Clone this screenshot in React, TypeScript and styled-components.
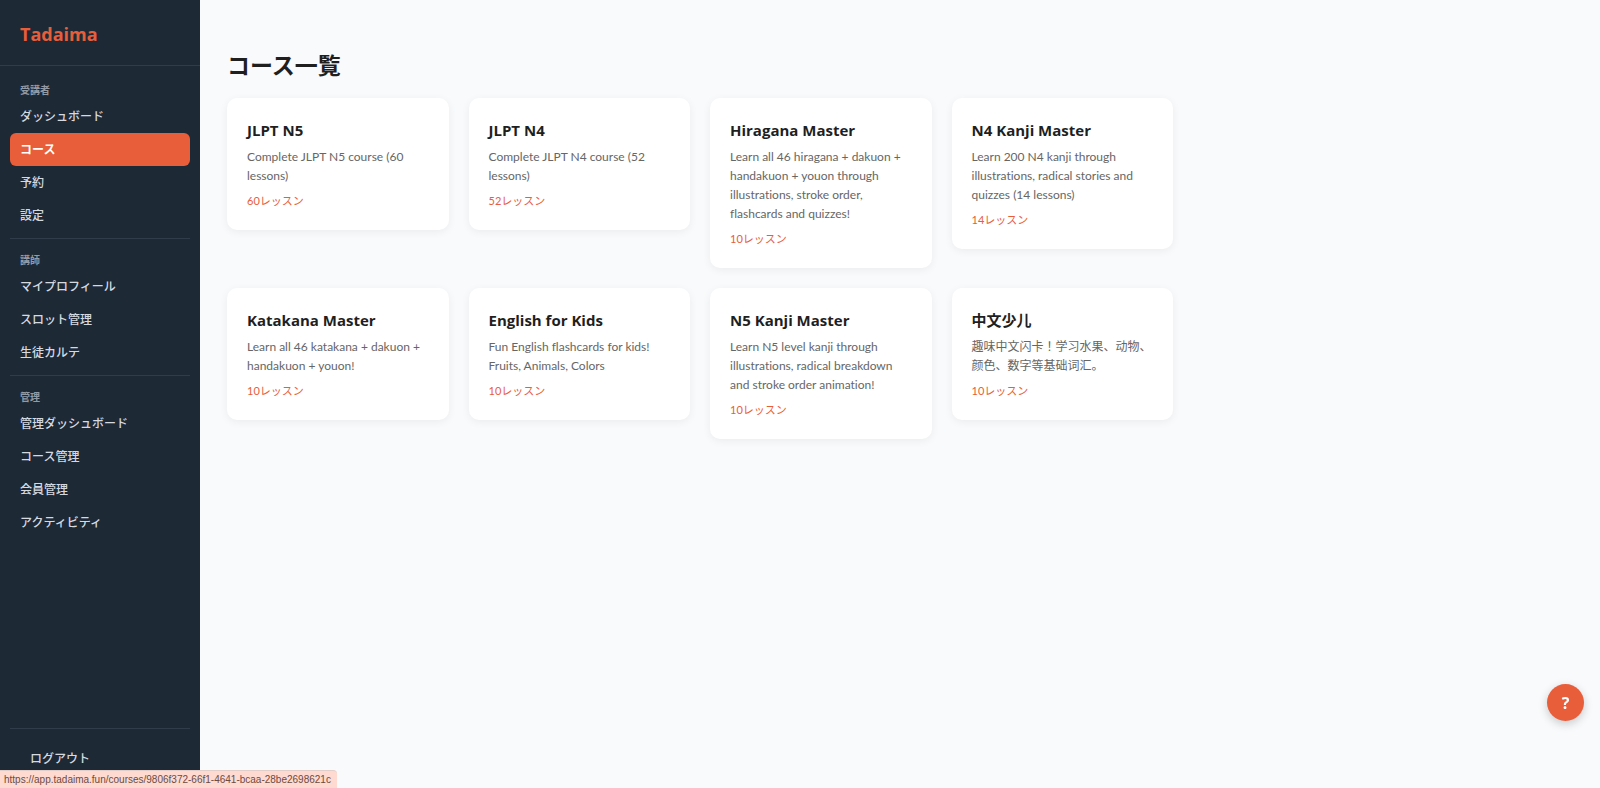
import React from 'react';
import styled, { createGlobalStyle } from 'styled-components';

const GlobalStyle = createGlobalStyle`
  *, *::before, *::after { box-sizing: border-box; }
  body {
    margin: 0;
    background: #f8fafc;
    color: #1f1f1f;
    font-family: "Open Sans", "Noto Sans CJK JP", sans-serif;
    font-size: 12px;
  }
`;

const Layout = styled.div`
  display: flex;
  min-height: 100vh;
`;

const Sidebar = styled.aside`
  display: flex;
  flex-direction: column;
  flex: none;
  position: sticky;
  top: 0;
  width: 200px;
  height: 100vh;
  background: #1e2936;
`;

const Brand = styled.a`
  padding: 22px 20px 18px;
  border-bottom: 1px solid #303c4a;
  color: #e85d3a;
  font-size: 18px;
  font-weight: 700;
  line-height: 25px;
  text-decoration: none;
`;

const Nav = styled.nav`
  flex: 1;
  min-height: 0;
  padding: 14px 10px 0;
  overflow: hidden;
`;

const Section = styled.section`
  & + & {
    margin-top: 6px;
    padding-top: 11px;
    border-top: 1px solid #303c4a;
  }
`;

const SectionLabel = styled.h2`
  margin: 0;
  padding: 0 10px;
  color: #929aa6;
  font-size: 10px;
  font-weight: 700;
  line-height: 20px;
`;

const NavLink = styled.a<{ $active?: boolean }>`
  display: block;
  padding: 0 10px;
  border-radius: 6px;
  background: ${({ $active }) => ($active ? '#e85d3a' : 'transparent')};
  color: ${({ $active }) => ($active ? '#ffffff' : '#d5dae1')};
  font-weight: ${({ $active }) => ($active ? 700 : 500)};
  line-height: 33px;
  text-decoration: none;
`;

const SidebarFooter = styled.div`
  margin: 0 10px;
  padding: 14px 10px 13px;
  border-top: 1px solid #303c4a;
`;

const LogoutButton = styled.button`
  display: block;
  width: 100%;
  padding: 0 10px;
  border: 0;
  background: none;
  color: #d5dae1;
  font: inherit;
  font-weight: 500;
  line-height: 32px;
  text-align: left;
  cursor: pointer;
`;

const Main = styled.main`
  flex: 1;
  min-width: 0;
  padding: 48px 27px;
`;

const PageTitle = styled.h1`
  margin: 0 0 16px;
  font-size: 23px;
  font-weight: 700;
  line-height: 34px;
`;

const CourseGrid = styled.div`
  display: grid;
  grid-template-columns: repeat(auto-fill, minmax(200px, 1fr));
  align-items: start;
  gap: 20px;
  max-width: 946px;
`;

const CourseCard = styled.a`
  display: block;
  padding: 20px;
  border-radius: 10px;
  background: #ffffff;
  box-shadow: 0 2px 8px rgba(0, 0, 0, 0.06);
  color: inherit;
  text-decoration: none;
`;

const CourseTitle = styled.h3`
  margin: 0 0 5px;
  font-size: 15px;
  font-weight: 700;
  line-height: 24px;
`;

const CourseText = styled.p`
  margin: 0 0 6px;
  color: #666666;
  font-family: Lato, "Noto Sans CJK JP", sans-serif;
  font-variant-ligatures: none;
  line-height: 19px;
`;

const LessonCount = styled.div`
  color: #e85d3a;
  font-family: Lato, "Noto Sans CJK JP", sans-serif;
  font-size: 11px;
  line-height: 19px;
`;

const HelpButton = styled.button`
  position: fixed;
  right: 16px;
  bottom: 67px;
  width: 37px;
  height: 37px;
  padding: 0;
  border: 0;
  border-radius: 50%;
  background: #e85d3a;
  box-shadow: 0 3px 10px rgba(0, 0, 0, 0.2);
  color: #ffffff;
  font: inherit;
  font-size: 16px;
  font-weight: 700;
  cursor: pointer;
`;

const LinkStatus = styled.div`
  position: fixed;
  left: 0;
  bottom: 0;
  padding: 0 6px 0 4px;
  border-top: 1px solid #e3cdc8;
  border-top-right-radius: 4px;
  background: #ffdad1;
  color: #6b4b43;
  font-family: "Liberation Sans", sans-serif;
  font-size: 10px;
  line-height: 17px;
`;

type NavEntry = { label: string; href: string; active?: boolean };

const sections: { label: string; items: NavEntry[] }[] = [
  {
    label: '受講者',
    items: [
      { label: 'ダッシュボード', href: '#dashboard' },
      { label: 'コース', href: '#courses', active: true },
      { label: '予約', href: '#bookings' },
      { label: '設定', href: '#settings' },
    ],
  },
  {
    label: '講師',
    items: [
      { label: 'マイプロフィール', href: '#profile' },
      { label: 'スロット管理', href: '#slots' },
      { label: '生徒カルテ', href: '#students' },
    ],
  },
  {
    label: '管理',
    items: [
      { label: '管理ダッシュボード', href: '#admin' },
      { label: 'コース管理', href: '#admin-courses' },
      { label: '会員管理', href: '#members' },
      { label: 'アクティビティ', href: '#activity' },
    ],
  },
];

type Course = { title: string; text: string; lessons: number };

const courses: Course[] = [
  { title: 'JLPT N5', text: 'Complete JLPT N5 course (60 lessons)', lessons: 60 },
  { title: 'JLPT N4', text: 'Complete JLPT N4 course (52 lessons)', lessons: 52 },
  {
    title: 'Hiragana Master',
    text: 'Learn all 46 hiragana + dakuon + handakuon + youon through illustrations, stroke order, flashcards and quizzes!',
    lessons: 10,
  },
  {
    title: 'N4 Kanji Master',
    text: 'Learn 200 N4 kanji through illustrations, radical stories and quizzes (14 lessons)',
    lessons: 14,
  },
  {
    title: 'Katakana Master',
    text: 'Learn all 46 katakana + dakuon + handakuon + youon!',
    lessons: 10,
  },
  {
    title: 'English for Kids',
    text: 'Fun English flashcards for kids! Fruits, Animals, Colors',
    lessons: 10,
  },
  {
    title: 'N5 Kanji Master',
    text: 'Learn N5 level kanji through illustrations, radical breakdown and stroke order animation!',
    lessons: 10,
  },
  {
    title: '中文少儿',
    text: '趣味中文闪卡！学习水果、动物、颜色、数字等基础词汇。',
    lessons: 10,
  },
];

export default function App() {
  return (
    <Layout lang="ja">
      <GlobalStyle />
      <Sidebar>
        <Brand href="#home">Tadaima</Brand>
        <Nav>
          {sections.map((section) => (
            <Section key={section.label}>
              <SectionLabel>{section.label}</SectionLabel>
              {section.items.map((item) => (
                <NavLink
                  key={item.label}
                  href={item.href}
                  $active={item.active}
                  aria-current={item.active ? 'page' : undefined}
                >
                  {item.label}
                </NavLink>
              ))}
            </Section>
          ))}
        </Nav>
        <SidebarFooter>
          <LogoutButton type="button">ログアウト</LogoutButton>
        </SidebarFooter>
      </Sidebar>
      <Main>
        <PageTitle>コース一覧</PageTitle>
        <CourseGrid>
          {courses.map((course) => (
            <CourseCard key={course.title} href="#course">
              <CourseTitle>{course.title}</CourseTitle>
              <CourseText>{course.text}</CourseText>
              <LessonCount>{course.lessons}レッスン</LessonCount>
            </CourseCard>
          ))}
        </CourseGrid>
      </Main>
      <HelpButton type="button" aria-label="ヘルプ">?</HelpButton>
      <LinkStatus>https://app.tadaima.fun/courses/9806f372-66f1-4641-bcaa-28be2698621c</LinkStatus>
    </Layout>
  );
}
